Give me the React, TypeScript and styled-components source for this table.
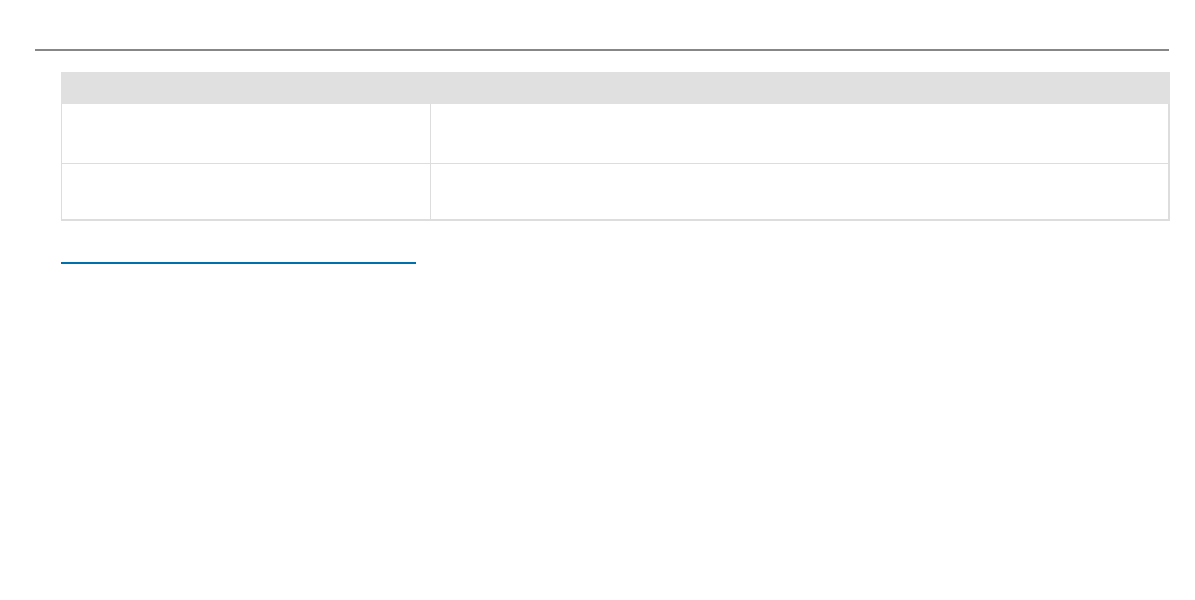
import React from "react";
import styled, { createGlobalStyle } from "styled-components";

const Global = createGlobalStyle`
  *, *::before, *::after { box-sizing: border-box; }
  html, body { margin: 0; padding: 0; background: #ffffff; }
  body { font-family: "Liberation Sans", Arial, sans-serif; }
`;

const Page = styled.div`
  display: flex;
  flex-direction: column;
  padding-top: 49px;
`;

const Rule = styled.div`
  margin-left: 35px;
  width: 1134px;
  height: 2px;
  background: #878787;
`;

const Table = styled.div`
  margin-top: 21px;
  margin-left: 61px;
  width: 1109px;
  display: flex;
  flex-direction: column;
  border-bottom: 2px solid #dddddd;
`;

const Header = styled.div`
  height: 32px;
  background: #e0e0e0;
`;

const Row = styled.div<{ $h: number; $last?: boolean }>`
  display: grid;
  grid-template-columns: 368px 1fr;
  height: ${(p) => p.$h}px;
  border-left: 1px solid #dddddd;
  border-right: 2px solid #dddddd;
  border-bottom: ${(p) => (p.$last ? "none" : "1px solid #dddddd")};
`;

const Cell = styled.div<{ $divider?: boolean }>`
  border-left: ${(p) => (p.$divider ? "1px solid #dddddd" : "none")};
`;

const LinkLine = styled.div`
  margin-top: 41px;
  margin-left: 61px;
  width: 355px;
  height: 1.5px;
  background: #0070ac;
`;

export default function App() {
  return (
    <>
      <Global />
      <Page>
        <Rule />
        <Table>
          <Header />
          <Row $h={60}>
            <Cell />
            <Cell $divider />
          </Row>
          <Row $h={55} $last>
            <Cell />
            <Cell $divider />
          </Row>
        </Table>
        <LinkLine />
      </Page>
    </>
  );
}
